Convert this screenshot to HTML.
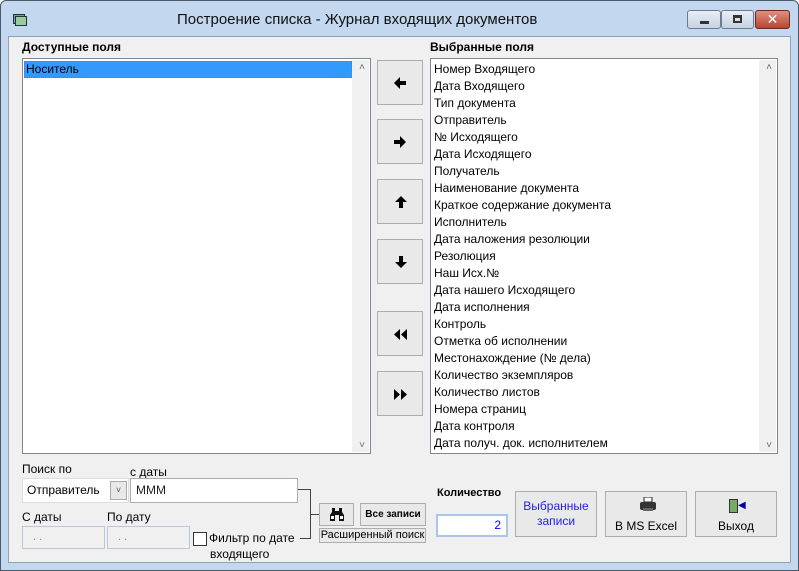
<!DOCTYPE html>
<html><head><meta charset="utf-8"><style>
*{box-sizing:border-box;margin:0;padding:0}
body{width:799px;height:571px;overflow:hidden;background:#fff;font-family:"Liberation Sans","DejaVu Sans",sans-serif;font-size:12px;color:#000;position:relative}
.a{position:absolute}
.frame{left:0;top:0;width:799px;height:571px;background:#c3d7ee;border:1px solid #4a5a6a;border-radius:6px 6px 0 0}
.client{left:8px;top:36px;width:783px;height:527px;background:#f0f0f0;border:1px solid #8ea2b8}
.list{background:#fff;border:1px solid #828790}
.btn{background:#e9e9e9;border:1px solid #adadad}
.row{position:absolute;left:3px;height:17px;line-height:17px;white-space:nowrap}
.lbl{font-weight:bold;font-size:12px}
.tb{background:#fff;border:1px solid #abadb3}
.dis{background:#f0f0f0;border:1px solid #bcc7d8;color:#888;font-size:11px;padding-left:10px;line-height:20px}
.ln{background:#444}
</style></head><body>
<div class="a frame"></div>
<div class="a" style="left:13px;top:14px;width:12px;height:10px;background:#6a8;border:1px solid #234"></div>
<div class="a" style="left:15px;top:16px;width:12px;height:10px;background:#9c9;border:1px solid #234"></div>
<div class="a" style="left:177px;top:11px;font-size:15px;color:#111">Построение списка - Журнал входящих документов</div>
<div class="a" style="left:687px;top:10px;width:34px;height:19px;border:1px solid #6c7c90;border-radius:3px;background:linear-gradient(#e8eef6,#c6d2e2)"><div class="a" style="left:12px;top:10px;width:9px;height:3px;background:#333"></div></div>
<div class="a" style="left:721px;top:10px;width:33px;height:19px;border:1px solid #6c7c90;border-radius:3px;background:linear-gradient(#e8eef6,#c6d2e2)"><div class="a" style="left:11px;top:4px;width:9px;height:8px;border:2px solid #333;border-top-width:3px"></div></div>
<div class="a" style="left:755px;top:10px;width:35px;height:19px;border:1px solid #6a2a20;border-radius:3px;background:linear-gradient(#e09080,#b84530);color:#fff;font-weight:bold;font-size:14px;text-align:center;line-height:17px">✕</div>
<div class="a client"></div>

<div class="a lbl" style="left:22px;top:40px">Доступные поля</div>
<div class="a lbl" style="left:430px;top:40px">Выбранные поля</div>

<div class="a list" style="left:22px;top:58px;width:349px;height:396px">
 <div class="a" style="left:1px;top:2px;width:328px;height:17px;background:#3399ff;border:1px dotted #c60"></div>
 <div class="row" style="top:2px">Носитель</div>
 <div class="a" style="right:1px;top:1px;width:17px;height:392px;background:#f0f0f0"></div>
 <div class="a" style="right:5px;top:3px;font-size:10px;color:#666">˄</div>
 <div class="a" style="right:5px;bottom:2px;font-size:10px;color:#666">˅</div>
</div>

<div class="a list" style="left:430px;top:58px;width:348px;height:396px">
 <div class="a" style="right:1px;top:1px;width:17px;height:392px;background:#f0f0f0"></div>
 <div class="a" style="right:5px;top:3px;font-size:10px;color:#666">˄</div>
 <div class="a" style="right:5px;bottom:2px;font-size:10px;color:#666">˅</div>
 <div class="row" style="top:2px">Номер Входящего</div>
 <div class="row" style="top:19px">Дата Входящего</div>
 <div class="row" style="top:36px">Тип документа</div>
 <div class="row" style="top:53px">Отправитель</div>
 <div class="row" style="top:70px">№ Исходящего</div>
 <div class="row" style="top:87px">Дата Исходящего</div>
 <div class="row" style="top:104px">Получатель</div>
 <div class="row" style="top:121px">Наименование документа</div>
 <div class="row" style="top:138px">Краткое содержание документа</div>
 <div class="row" style="top:155px">Исполнитель</div>
 <div class="row" style="top:172px">Дата наложения резолюции</div>
 <div class="row" style="top:189px">Резолюция</div>
 <div class="row" style="top:206px">Наш Исх.№</div>
 <div class="row" style="top:223px">Дата нашего Исходящего</div>
 <div class="row" style="top:240px">Дата исполнения</div>
 <div class="row" style="top:257px">Контроль</div>
 <div class="row" style="top:274px">Отметка об исполнении</div>
 <div class="row" style="top:291px">Местонахождение (№ дела)</div>
 <div class="row" style="top:308px">Количество экземпляров</div>
 <div class="row" style="top:325px">Количество листов</div>
 <div class="row" style="top:342px">Номера страниц</div>
 <div class="row" style="top:359px">Дата контроля</div>
 <div class="row" style="top:376px">Дата получ. док. исполнителем</div>
</div>

<div class="a btn" style="left:377px;top:60px;width:46px;height:45px"><svg class="a" style="left:16px;top:16px" width="12" height="12"><path d="M0 6 L6 0 L6 4 L12 4 L12 8 L6 8 L6 12Z"/></svg></div>
<div class="a btn" style="left:377px;top:119px;width:46px;height:45px"><svg class="a" style="left:16px;top:16px" width="12" height="12"><path d="M12 6 L6 0 L6 4 L0 4 L0 8 L6 8 L6 12Z"/></svg></div>
<div class="a btn" style="left:377px;top:179px;width:46px;height:45px"><svg class="a" style="left:17px;top:16px" width="12" height="12"><path d="M6 0 L0 6 L4 6 L4 12 L8 12 L8 6 L12 6Z"/></svg></div>
<div class="a btn" style="left:377px;top:239px;width:46px;height:45px"><svg class="a" style="left:17px;top:16px" width="12" height="12"><path d="M6 12 L0 6 L4 6 L4 0 L8 0 L8 6 L12 6Z"/></svg></div>
<div class="a btn" style="left:377px;top:311px;width:46px;height:45px"><svg class="a" style="left:16px;top:17px" width="14" height="11"><path d="M0 5.5 L6 0 L6 11Z M7 5.5 L13 0 L13 11Z"/></svg></div>
<div class="a btn" style="left:377px;top:371px;width:46px;height:45px"><svg class="a" style="left:16px;top:17px" width="14" height="11"><path d="M13 5.5 L7 0 L7 11Z M6 5.5 L0 0 L0 11Z"/></svg></div>

<div class="a" style="left:22px;top:462px">Поиск по</div>
<div class="a" style="left:130px;top:465px">с даты</div>
<div class="a tb" style="left:22px;top:478px;width:107px;height:25px;line-height:23px;padding-left:4px;border-color:#ddd">Отправитель</div>
<div class="a" style="left:110px;top:481px;width:17px;height:19px;background:#e8e8e8;border:1px solid #aaa;font-size:9px;text-align:center;line-height:17px;color:#555">˅</div>
<div class="a tb" style="left:130px;top:478px;width:168px;height:25px;line-height:23px;padding-left:5px;color:#222">МММ</div>
<div class="a" style="left:22px;top:510px">С даты</div>
<div class="a" style="left:107px;top:510px">По дату</div>
<div class="a dis" style="left:22px;top:526px;width:83px;height:23px">. .</div>
<div class="a dis" style="left:107px;top:526px;width:83px;height:23px">. .</div>
<div class="a" style="left:193px;top:532px;width:14px;height:14px;background:#fff;border:1px solid #333"></div>
<div class="a" style="left:209px;top:531px">Фильтр по дате</div>
<div class="a" style="left:210px;top:547px">входящего</div>
<div class="a ln" style="left:298px;top:489px;width:12px;height:1px"></div>
<div class="a ln" style="left:310px;top:489px;width:1px;height:50px"></div>
<div class="a ln" style="left:300px;top:538px;width:10px;height:1px"></div>
<div class="a ln" style="left:310px;top:514px;width:9px;height:1px"></div>
<div class="a btn" style="left:319px;top:503px;width:35px;height:23px"><svg class="a" style="left:10px;top:4px" width="14" height="13"><path d="M2 0h3v3h4V0h3v4l2 3v6H9V7H5v6H0V7l2-3Z" fill="#111"/><rect x="1" y="8" width="3" height="3" fill="#fff"/><rect x="10" y="8" width="3" height="3" fill="#fff"/></svg></div>
<div class="a btn" style="left:360px;top:503px;width:66px;height:23px;text-align:center;font-size:10px;font-weight:bold;line-height:21px">Все записи</div>
<div class="a btn" style="left:319px;top:528px;width:107px;height:15px;text-align:center;font-size:11px;line-height:13px">Расширенный поиск</div>

<div class="a lbl" style="left:437px;top:487px;font-size:11px">Количество</div>
<div class="a tb" style="left:436px;top:514px;width:72px;height:23px;border:2px solid #a9c6ea;text-align:right;padding-right:5px;line-height:19px;color:#00f">2</div>
<div class="a btn" style="left:515px;top:491px;width:82px;height:46px;text-align:center;color:#22e;line-height:15px;padding-top:7px">Выбранные<br>записи</div>
<div class="a btn" style="left:605px;top:491px;width:82px;height:46px;text-align:center"><svg class="a" style="left:34px;top:5px" width="16" height="16"><rect x="4" y="0" width="8" height="5" fill="#fff" stroke="#222"/><rect x="0" y="5" width="16" height="8" rx="2" fill="#333"/><rect x="3" y="11" width="10" height="3" fill="#666"/></svg><div class="a" style="left:0;top:27px;width:80px">В MS Excel</div></div>
<div class="a btn" style="left:695px;top:491px;width:82px;height:46px;text-align:center"><div class="a" style="left:33px;top:7px;width:9px;height:14px;background:#7a6;border:1px solid #333"></div><div class="a" style="left:42px;top:8px;color:#00a;font-size:10px">◀</div><div class="a" style="left:0;top:27px;width:80px">Выход</div></div>
</body></html>
